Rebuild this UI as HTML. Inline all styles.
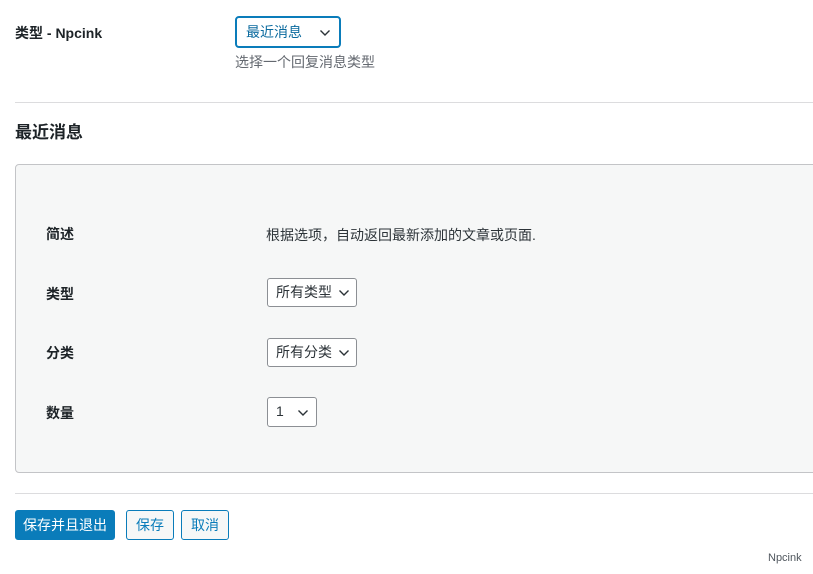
<!DOCTYPE html>
<html><head><meta charset="utf-8"><style>
*{margin:0;padding:0;box-sizing:border-box}
body{width:813px;height:574px;background:#fff;position:relative;overflow:hidden;font-family:"Liberation Sans","Noto Sans CJK SC",sans-serif;color:#1d2327;font-size:14px}
.a{position:absolute;white-space:nowrap}
.b{font-weight:bold}
.sel{position:absolute;border:1px solid #8c8f94;border-radius:3px;background:#fff;font-size:14px;color:#2c3338;padding-left:8px;line-height:26px}
.chev{position:absolute;right:7px;top:9px;width:12px;height:8px}
.btn{position:absolute;border:1px solid #0a7cba;border-radius:3px;background:#f6f7f7;color:#0a7cba;font-size:14px;text-align:center;line-height:26px}
</style></head><body>
<div class="a b" style="left:15px;top:23px;line-height:20px">类型 - Npcink</div>
<div class="sel" style="left:235px;top:16px;width:106px;height:32px;border:2px solid #0a7cba;border-radius:4px;color:#0a6a9e;line-height:28px;padding-left:9px">最近消息<svg class="chev" style="top:11px;right:8px" viewBox="0 0 12 8"><path d="M1.5 1.5L6 6l4.5-4.5" fill="none" stroke="#2c3338" stroke-width="1.4"/></svg></div>
<div class="a" style="left:235px;top:52px;color:#646970;line-height:20px">选择一个回复消息类型</div>
<div class="a" style="left:15px;top:102px;width:798px;height:1px;background:#dcdcde"></div>
<div class="a b" style="left:15px;top:121px;font-size:17px;line-height:24px">最近消息</div>
<div class="a" style="left:15px;top:164px;width:820px;height:309px;background:#f6f7f7;border:1px solid #c3c4c7;border-radius:4px"></div>
<div class="a b" style="left:46px;top:224px;line-height:20px">简述</div>
<div class="a" style="left:266px;top:225px;line-height:20px;color:#2c3338">根据选项，自动返回最新添加的文章或页面.</div>
<div class="a b" style="left:46px;top:284px;line-height:20px">类型</div>
<div class="sel" style="left:267px;top:278px;width:90px;height:29px">所有类型<svg class="chev" style="top:10px;right:6px" viewBox="0 0 12 8"><path d="M1.5 1.5L6 6l4.5-4.5" fill="none" stroke="#2c3338" stroke-width="1.4"/></svg></div>
<div class="a b" style="left:46px;top:343px;line-height:20px">分类</div>
<div class="sel" style="left:267px;top:338px;width:90px;height:29px">所有分类<svg class="chev" style="top:10px;right:6px" viewBox="0 0 12 8"><path d="M1.5 1.5L6 6l4.5-4.5" fill="none" stroke="#2c3338" stroke-width="1.4"/></svg></div>
<div class="a b" style="left:46px;top:403px;line-height:20px">数量</div>
<div class="sel" style="left:267px;top:397px;width:50px;height:30px;line-height:27px">1<svg class="chev" style="top:11px;right:7px" viewBox="0 0 12 8"><path d="M1.5 1.5L6 6l4.5-4.5" fill="none" stroke="#2c3338" stroke-width="1.4"/></svg></div>
<div class="a" style="left:15px;top:493px;width:798px;height:1px;background:#dcdcde"></div>
<div class="btn" style="left:15px;top:510px;width:100px;height:30px;background:#0a7cba;color:#fff;line-height:28px">保存并且退出</div>
<div class="btn" style="left:126px;top:510px;width:48px;height:30px;line-height:28px">保存</div>
<div class="btn" style="left:181px;top:510px;width:48px;height:30px;line-height:28px">取消</div>
<div class="a" style="left:768px;top:551px;font-size:11px;color:#50575e;line-height:14px">Npcink</div>
</body></html>
